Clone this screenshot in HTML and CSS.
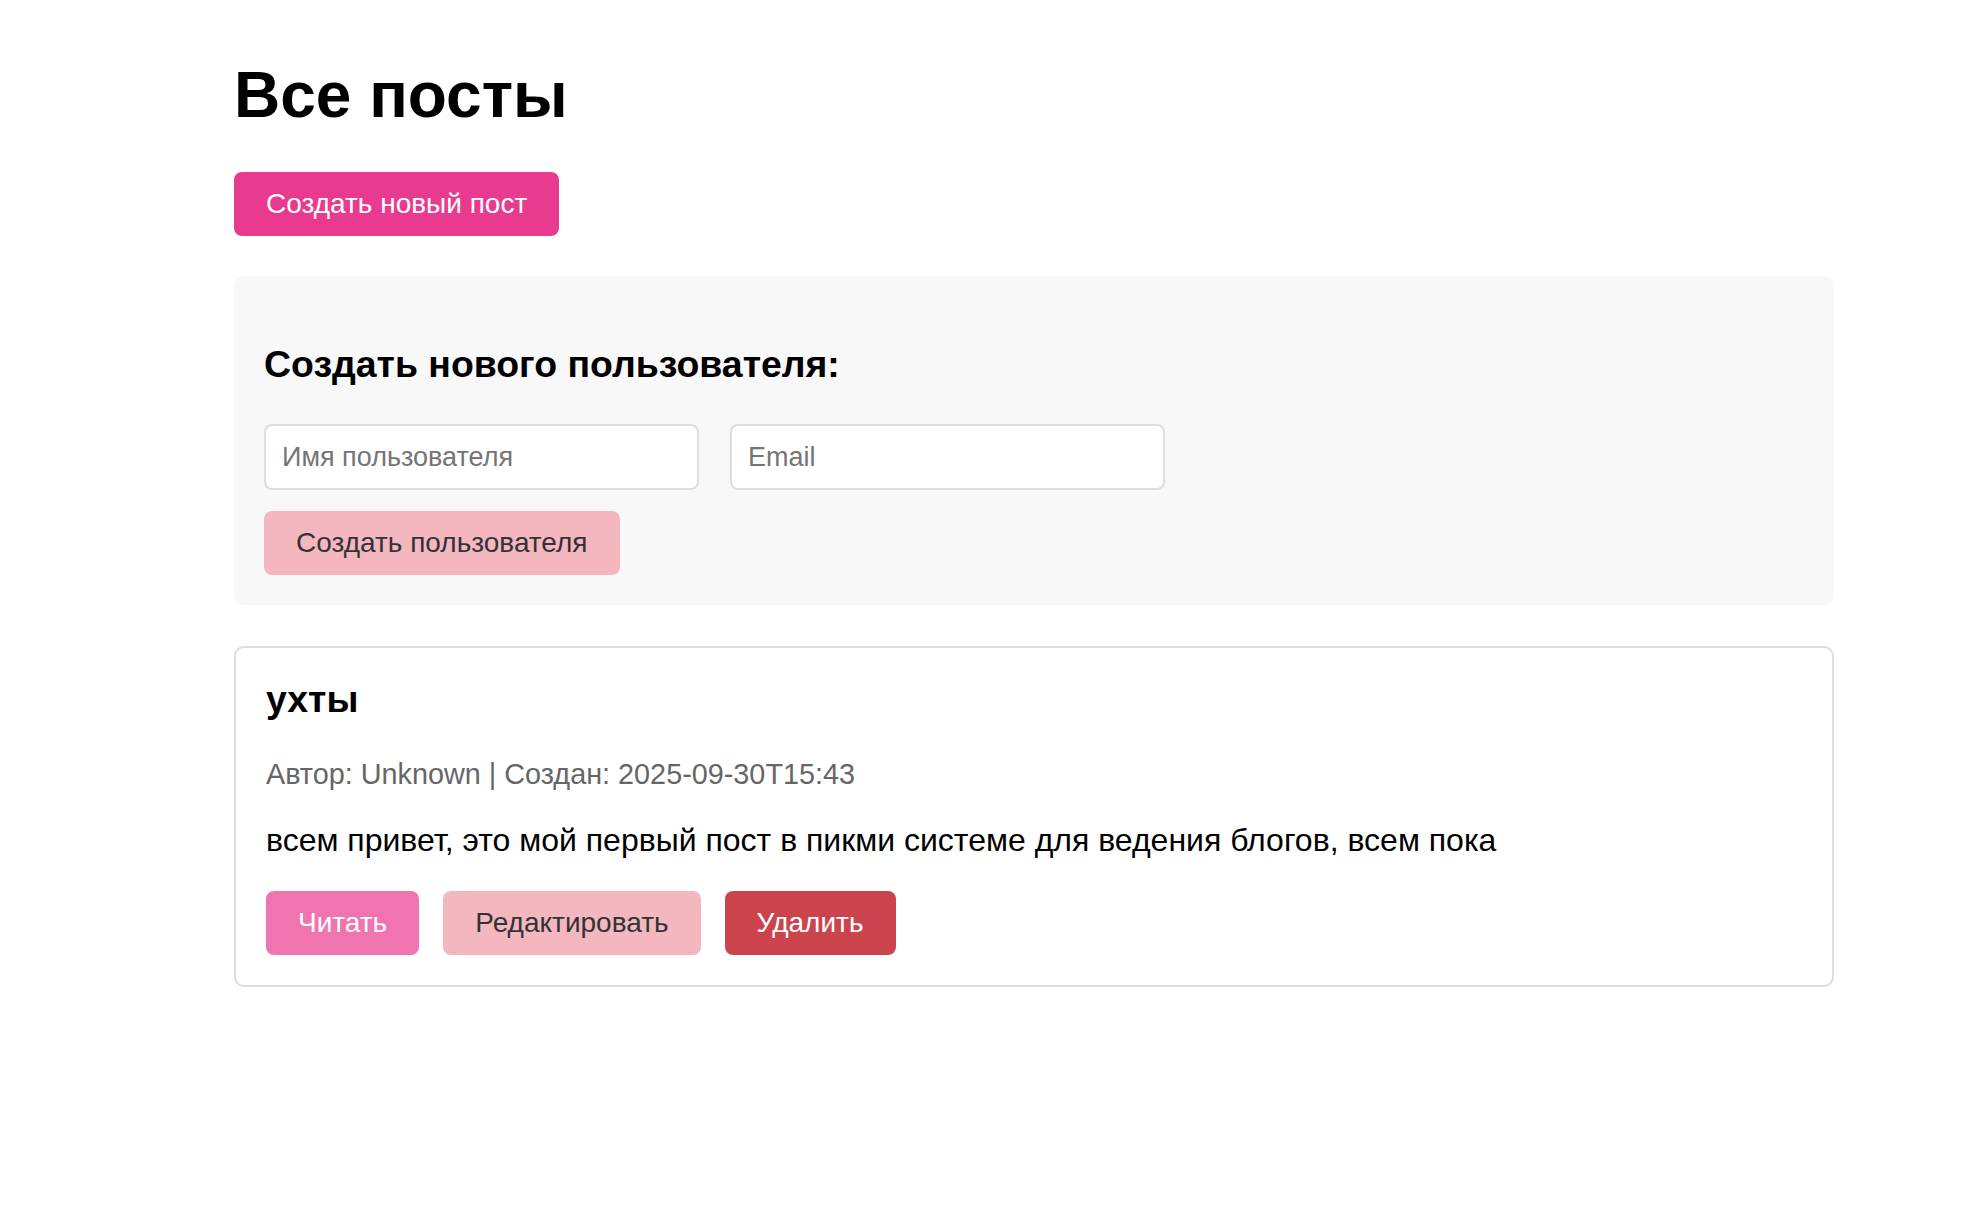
FILE: index.html
```html
<!DOCTYPE html>
<html lang="ru">
<head>
<meta charset="utf-8">
<title>Все посты</title>
<link rel="stylesheet" href="styles.css">
</head>
<body>
<div class="page">
  <main class="container">
    <h1 class="page-title">Все посты</h1>
    <button class="btn btn-primary" type="button">Создать новый пост</button>

    <section class="panel">
      <h3 class="panel-title">Создать нового пользователя:</h3>
      <div class="fields">
        <input class="field" type="text" placeholder="Имя пользователя">
        <input class="field" type="email" placeholder="Email">
      </div>
      <button class="btn btn-soft" type="button">Создать пользователя</button>
    </section>

    <article class="card">
      <h3 class="card-title">ухты</h3>
      <p class="card-meta">Автор: Unknown | Создан: 2025-09-30T15:43</p>
      <p class="card-text">всем привет, это мой первый пост в пикми системе для ведения блогов, всем пока</p>
      <div class="card-actions">
        <button class="btn btn-read" type="button">Читать</button>
        <button class="btn btn-soft" type="button">Редактировать</button>
        <button class="btn btn-danger" type="button">Удалить</button>
      </div>
    </article>
  </main>
</div>
</body>
</html>
```

FILE: styles.css
```css
* { box-sizing: border-box; }

html, body {
  margin: 0;
  background: #ffffff;
  font-family: "Liberation Sans", Arial, sans-serif;
  color: #000;
}

.page {
  display: flex;
  justify-content: center;
  padding-left: 98px;
}

.container {
  width: 1600px;
  display: flex;
  flex-direction: column;
  align-items: stretch;
  padding-top: 58px;
}

.page-title {
  margin: 0 0 40px;
  font-size: 64px;
  line-height: 74px;
  font-weight: 700;
}

.btn {
  border: none;
  border-radius: 8px;
  font-family: "Liberation Sans", Arial, sans-serif;
  font-size: 28px;
  line-height: 34px;
  padding: 15px 32px;
  height: 64px;
  cursor: pointer;
  align-self: flex-start;
}

.btn-primary {
  background: #e83a8e;
  color: #fff;
  margin-bottom: 40px;
}

.btn-soft {
  background: #f4b7c0;
  color: #333;
}

.btn-read {
  background: #ef74b0;
  color: #fff;
}

.btn-danger {
  background: #cb444d;
  color: #fff;
}

.panel {
  background: #f8f8f8;
  border-radius: 10px;
  padding: 30px;
  display: flex;
  flex-direction: column;
}

.panel-title {
  margin: 37px 0 38px;
  font-size: 37.44px;
  line-height: 43px;
  font-weight: 700;
}

.fields {
  display: flex;
  gap: 31px;
  margin-bottom: 21px;
}

.field {
  width: 435px;
  height: 66px;
  border: 2px solid #ddd;
  border-radius: 8px;
  background: #fff;
  padding: 0 16px;
  font-family: "Liberation Sans", Arial, sans-serif;
  font-size: 27px;
  color: #333;
  outline: none;
}

.field::placeholder {
  color: #757575;
}

.card {
  margin-top: 41px;
  border: 2px solid #ddd;
  border-radius: 10px;
  padding: 30px;
  display: flex;
  flex-direction: column;
}

.card-title {
  margin: 0 0 37px;
  font-size: 37.44px;
  line-height: 43px;
  font-weight: 700;
}

.card-meta {
  margin: 0 0 31px;
  font-size: 28.8px;
  line-height: 33px;
  color: #666;
}

.card-text {
  margin: 0 0 32px;
  font-size: 32px;
  line-height: 37px;
  color: #000;
}

.card-actions {
  display: flex;
  gap: 24px;
}
```
